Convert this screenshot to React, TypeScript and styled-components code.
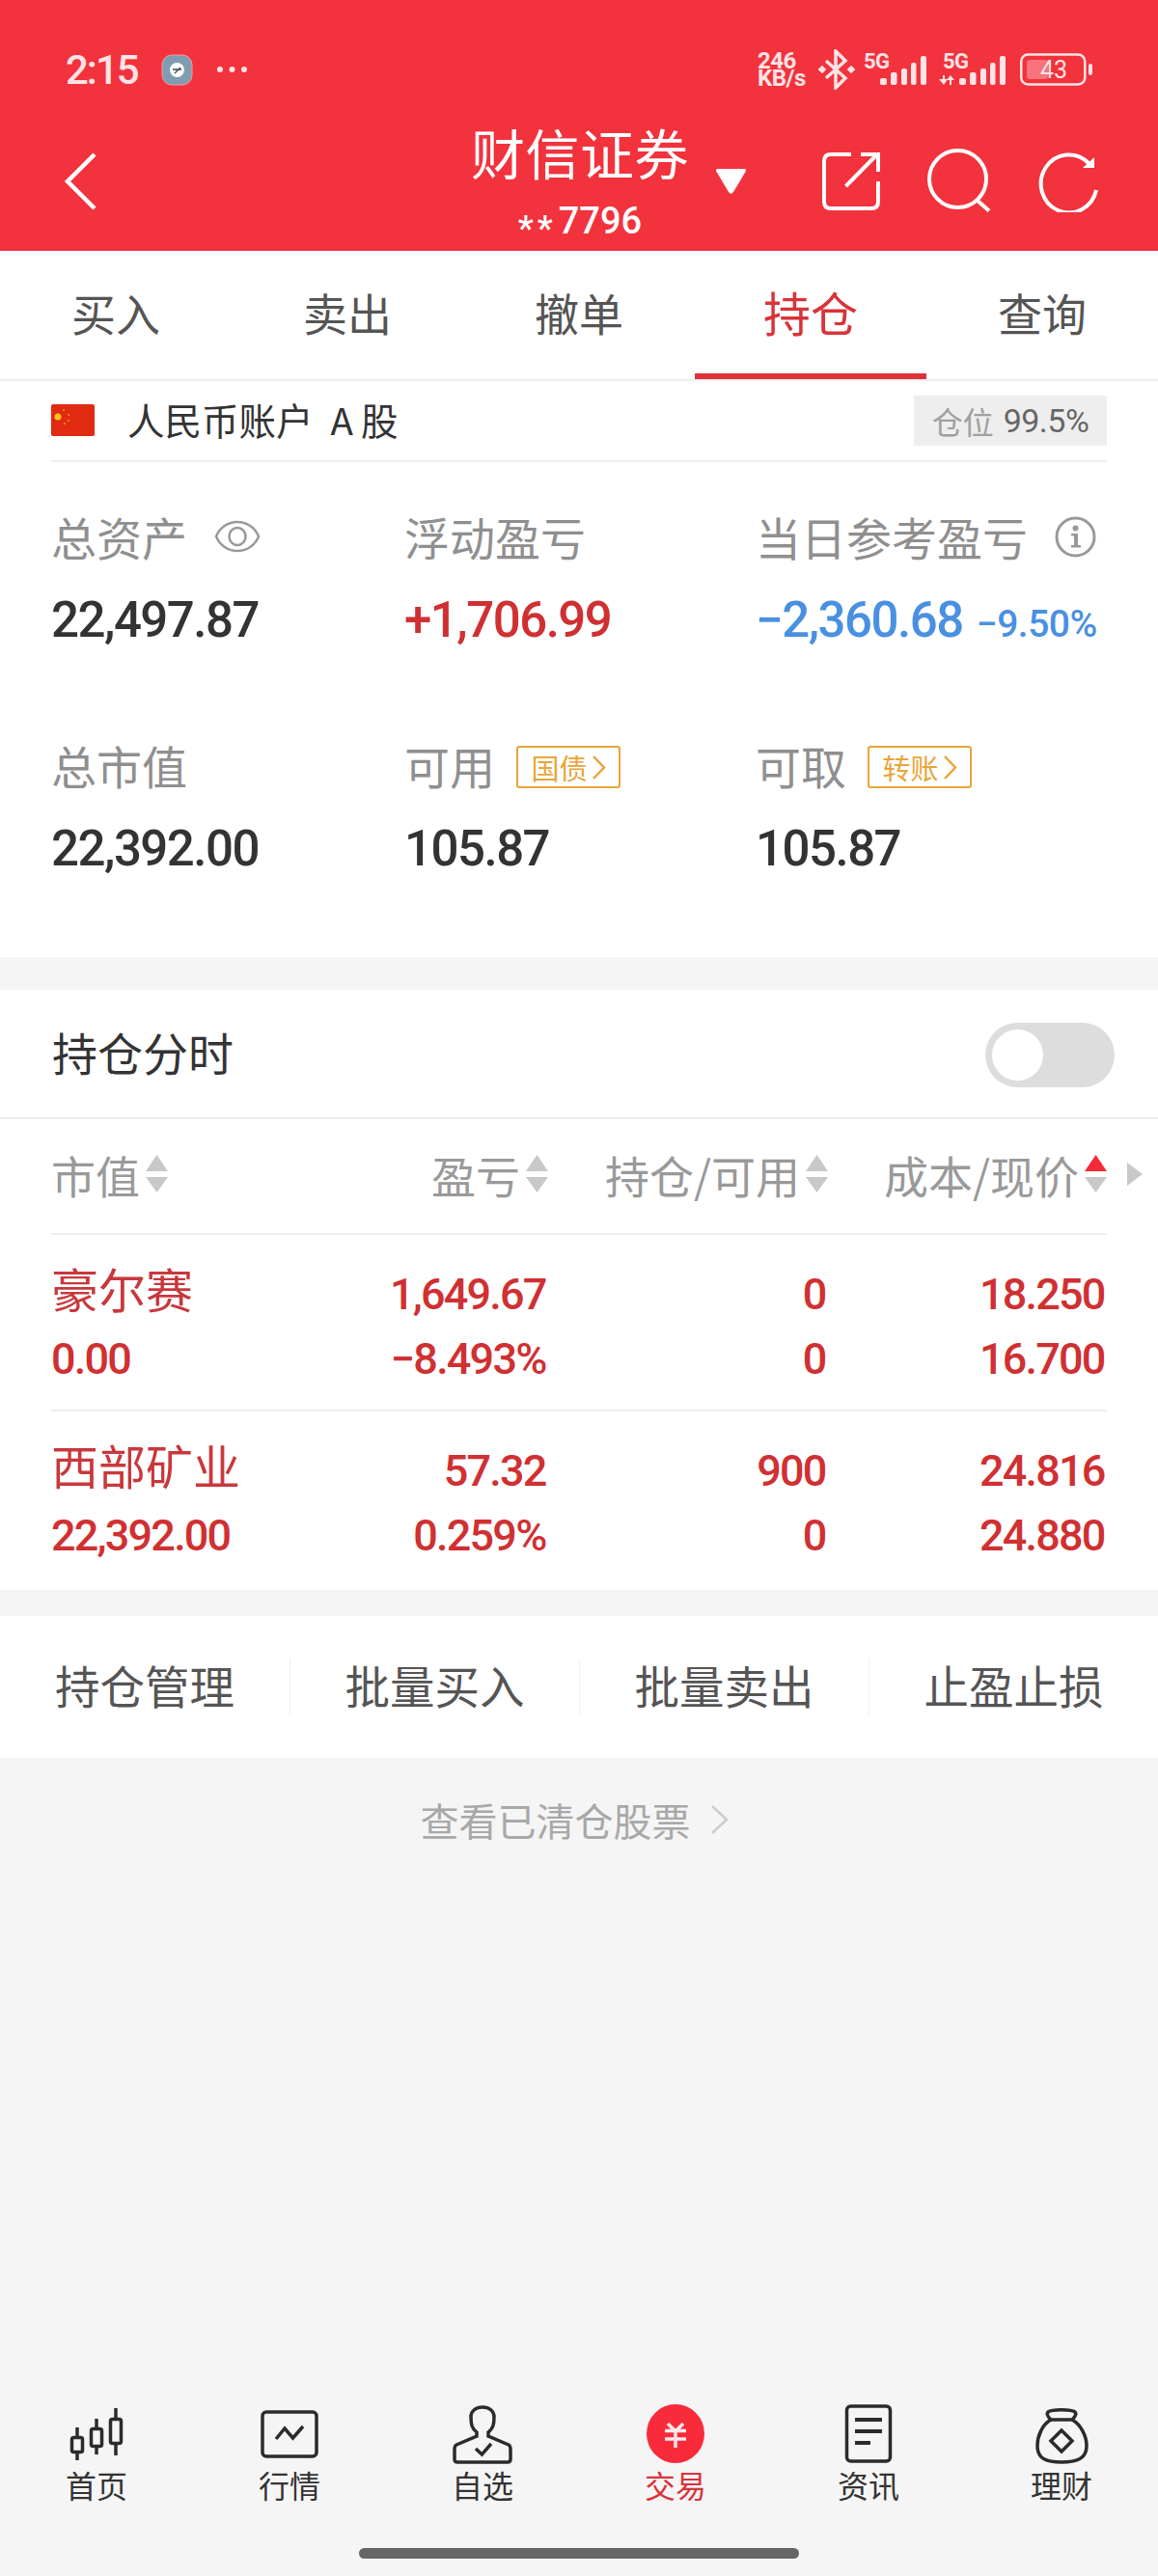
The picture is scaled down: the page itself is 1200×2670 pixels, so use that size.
import React from "react";
import styled, { createGlobalStyle } from "styled-components";

const Global = createGlobalStyle`
  html, body { margin: 0; padding: 0; background: #f5f5f5; }
  #root { width: 1200px; height: 2670px; }
`;

const CJK = `"Noto Sans CJK SC", "Noto Sans", sans-serif`;
const NUM = `Roboto, "Noto Sans CJK SC", sans-serif`;
const RED = "#d03032";

const Page = styled.div`
  width: 1200px;
  height: 2670px;
  display: flex;
  flex-direction: column;
  background: #f5f5f5;
  font-family: ${CJK};
  overflow: hidden;
  position: relative;
`;
const Header = styled.header`
  height: 260px;
  background: #f2323c;
  color: #fff;
  display: flex;
  flex-direction: column;
  flex: none;
`;
const StatusBar = styled.div`
  height: 72px;
  margin-top: 36px;
  padding: 0 68px;
  display: flex;
  align-items: center;
  justify-content: space-between;
  color: #ffe3e5;
`;
const StatusLeft = styled.div`
  display: flex;
  align-items: center;
  gap: 24px;
`;
const Clock = styled.span`
  font: 500 42px Roboto, sans-serif;
  letter-spacing: -2px;
`;
const StatusRight = styled.div`
  display: flex;
  align-items: center;
  gap: 9px;
`;
const Speed = styled.div`
  display: flex;
  flex-direction: column;
  font: 700 24px/18px Roboto, sans-serif;
  letter-spacing: -0.5px;
  width: 54px;
`;
const SignalIcon = styled.svg`
  overflow: visible;
  height: 34px;
  flex: none;
`;
const NavRow = styled.div`
  flex: 1;
  display: flex;
  align-items: flex-start;
  padding: 0 62px 0 66px;
`;
const BackIcon = styled.svg`
  width: 34px;
  height: 60px;
  margin-top: 50px;
  flex: none;
`;
const TitleBlock = styled.div`
  margin-left: 388px;
  margin-top: 16px;
  display: flex;
  align-items: flex-start;
`;
const TitleText = styled.div`
  width: 226px;
  text-align: center;
`;
const Title = styled.div`
  font-size: 56px;
  line-height: 66px;
  letter-spacing: 0.5px;
  white-space: nowrap;
`;
const Sub = styled.div`
  font: 500 38px/42px Roboto, sans-serif;
  margin-top: 18px;
`;
const Star = styled.span`
  vertical-align: -7px;
  font-size: 36px;
  letter-spacing: 4px;
  margin-right: 2px;
`;
const Caret = styled.svg`
  width: 33px;
  height: 28px;
  margin: 50px 0 0 27px;
  flex: none;
`;
const NavIcons = styled.div`
  display: flex;
  align-items: flex-start;
  gap: 49px;
  margin: 46px 0 0 auto;
`;
const Tabs = styled.nav`
  height: 135px;
  background: #fff;
  display: grid;
  grid-template-columns: repeat(5, 240px);
  border-bottom: 2px solid #eeeeee;
  box-sizing: border-box;
  flex: none;
`;
const Tab = styled.div<{ $on?: boolean }>`
  display: flex;
  align-items: center;
  justify-content: center;
  padding-bottom: 8px;
  box-sizing: border-box;
  font-size: ${(p) => (p.$on ? 49 : 46)}px;
  color: ${(p) => (p.$on ? "#d9333a" : "#555")};
  position: relative;
  &::after {
    content: "";
    display: ${(p) => (p.$on ? "block" : "none")};
    position: absolute;
    left: 0;
    right: 0;
    bottom: 0;
    height: 6px;
    background: #dc3339;
  }
`;
const Assets = styled.section`
  background: #fff;
  height: 597px;
  padding: 0 53px;
  flex: none;
`;
const AccountRow = styled.div`
  height: 84px;
  box-sizing: border-box;
  border-bottom: 2px solid #eeeeee;
  padding-bottom: 1px;
  display: flex;
  align-items: center;
  font-size: 38.5px;
  color: #333;
`;
const AccountName = styled.span`
  padding-bottom: 3px;
`;
const Flag = styled.svg`
  width: 45px;
  height: 33px;
  margin-right: 34px;
`;
const ALetter = styled.span`
  padding: 0 8px 0 18px;
`;
const Spacer = styled.div`
  flex: 1;
`;
const Badge = styled.div`
  width: 200px;
  height: 52px;
  background: #eeeeee;
  display: flex;
  align-items: center;
  justify-content: center;
  gap: 10px;
  font-size: 32px;
  color: #a0a0a0;
`;
const BadgeValue = styled.span`
  font: 400 34px Roboto, sans-serif;
  letter-spacing: -0.5px;
  color: #666;
`;
const StatGrid = styled.div`
  display: grid;
  grid-template-columns: 366px 364px 1fr;
  padding-top: 44px;
  grid-auto-rows: 237px;
`;
const Stat = styled.div``;
const StatLabel = styled.div`
  display: flex;
  align-items: center;
  gap: 28px;
  font-size: 47px;
  line-height: 66px;
  color: #8f8f8f;
  height: 66px;
`;
const StatValue = styled.div<{ $tone?: string }>`
  font-family: ${NUM};
  font-weight: 500;
  font-size: 51px;
  letter-spacing: -1.5px;
  line-height: 66px;
  margin-top: 21px;
  color: ${(p) => p.$tone || "#333"};
  display: flex;
  align-items: baseline;
  gap: 14px;
`;
const SmallValue = styled.span`
  font-size: 39px;
  letter-spacing: -0.5px;
`;
const Tag = styled.span`
  width: 108px;
  height: 44px;
  margin: 4px 0 0 -6px;
  box-sizing: border-box;
  border: 2.5px solid #e8a53a;
  border-radius: 3px;
  color: #e8a53a;
  font-size: 29px;
  display: flex;
  align-items: center;
  justify-content: center;
  gap: 4px;
`;
const ChartRow = styled.div`
  margin-top: 34px;
  background: #fff;
  height: 134px;
  box-sizing: border-box;
  border-bottom: 2px solid #eeeeee;
  padding: 0 45px 0 54px;
  display: flex;
  align-items: center;
  justify-content: space-between;
  font-size: 47px;
  color: #333;
  flex: none;
`;
const ChartLabel = styled.span`
  padding-bottom: 6px;
`;
const Toggle = styled.div`
  width: 134px;
  height: 67px;
  margin-top: 2px;
  border-radius: 34px;
  background: #dddddd;
  position: relative;
  &::after {
    content: "";
    position: absolute;
    left: 7px;
    top: 7px;
    width: 53px;
    height: 53px;
    border-radius: 50%;
    background: #fff;
  }
`;
const Holdings = styled.section`
  background: #fff;
  padding: 0 53px;
  height: 488px;
  flex: none;
`;
const HeaderRow = styled.div`
  height: 120px;
  box-sizing: border-box;
  border-bottom: 2px solid #eeeeee;
  padding-bottom: 5px;
  display: grid;
  grid-template-columns: 300px 215px 290px 1fr;
  align-items: center;
  font-size: 46px;
  color: #999;
  position: relative;
`;
const HeadCell = styled.div<{ $left?: boolean }>`
  display: flex;
  align-items: center;
  justify-content: ${(p) => (p.$left ? "flex-start" : "flex-end")};
  gap: 6px;
  white-space: nowrap;
`;
const MoreArrow = styled.div`
  position: absolute;
  right: -37px;
  top: 50%;
  margin-top: -14px;
  width: 0;
  height: 0;
  border-left: 16px solid #c8c8c8;
  border-top: 12px solid transparent;
  border-bottom: 12px solid transparent;
`;
const StockRow = styled.div<{ $last?: boolean }>`
  height: ${(p) => (p.$last ? 185 : 183)}px;
  box-sizing: border-box;
  border-bottom: ${(p) => (p.$last ? "none" : "2px solid #eeeeee")};
  display: grid;
  grid-template-columns: 300px 215px 290px 1fr;
  align-content: start;
  padding-top: 28px;
  color: ${RED};
  grid-auto-rows: 67px;
`;
const StockName = styled.div`
  font-size: 49px;
  line-height: 54px;
  color: #c8383c;
  white-space: nowrap;
`;
const Cell = styled.div<{ $left?: boolean }>`
  font-family: ${NUM};
  font-weight: 500;
  font-size: 45px;
  letter-spacing: -1.8px;
  line-height: 67px;
  padding-right: ${(p) => (p.$left ? 0 : 2.5)}px;
  text-align: ${(p) => (p.$left ? "left" : "right")};
`;
const Actions = styled.div`
  margin-top: 27px;
  background: #fff;
  height: 147px;
  display: grid;
  grid-template-columns: repeat(4, 300px);
  align-items: center;
  flex: none;
`;
const Action = styled.div<{ $first?: boolean }>`
  height: 53px;
  display: flex;
  align-items: center;
  justify-content: center;
  padding-bottom: 6px;
  font-size: 46.5px;
  color: #555;
  border-left: ${(p) => (p.$first ? "none" : "1.5px solid #f0f0f0")};
`;
const ClosedLink = styled.div`
  margin-top: 36px;
  height: 56px;
  padding-right: 10px;
  display: flex;
  align-items: center;
  justify-content: center;
  gap: 20px;
  font-size: 40px;
  color: #a8a8a8;
  flex: none;
`;
const BottomNav = styled.nav`
  margin-top: auto;
  height: 179px;
  display: grid;
  grid-template-columns: repeat(6, 200px);
  flex: none;
`;
const NavItem = styled.div<{ $on?: boolean }>`
  display: flex;
  flex-direction: column;
  align-items: center;
  height: 110px;
  font-size: 32px;
  line-height: 40px;
  color: ${(p) => (p.$on ? "#d9333a" : "#333")};
`;
const IconBox = styled.svg`
  width: 70px;
  height: 64px;
  display: block;
  flex: none;
`;
const HomeBar = styled.div`
  position: absolute;
  left: 372px;
  top: 2641px;
  width: 456px;
  height: 11px;
  border-radius: 6px;
  background: #666;
`;

const Sort = ({ up }: { up?: boolean }) => (
  <svg width="23" height="39" viewBox="0 0 23 39">
    <path d="M11.5 0 L23 17 H0 Z" fill={up ? "#f42a38" : "#c8c8c8"} />
    <path d="M11.5 39 L23 23 H0 Z" fill="#c8c8c8" />
  </svg>
);
const TagChevron = () => (
  <svg width="15" height="27" viewBox="0 0 15 27">
    <path d="M2 2 L13 13.5 L2 25" fill="none" stroke="#e8a53a" strokeWidth="2.5" />
  </svg>
);
const LinkChevron = () => (
  <svg width="19" height="30" viewBox="0 0 19 30">
    <path d="M2 1 L17 15 L2 29" fill="none" stroke="#cccccc" strokeWidth="2.5" />
  </svg>
);
const Bars = ({ dx }: { dx: number }) => (
  <g fill="#ffe3e5">
    <rect x={17 + dx} y="26" width="7" height="7" rx="2" />
    <rect x={28 + dx} y="20" width="6.5" height="13" rx="2" />
    <rect x={39 + dx} y="16" width="6" height="17" rx="2" />
    <rect x={49 + dx} y="10" width="5.5" height="23" rx="2" />
    <rect x={59 + dx} y="3" width="6" height="30" rx="2" />
  </g>
);
const FiveG = ({ x }: { x: number }) => (
  <text x={x} y="16" fontFamily="Roboto" fontWeight="700" fontSize="22" letterSpacing="-0.5" fill="#ffe3e5">
    5G
  </text>
);

const stocks = [
  { name: "豪尔赛", value: "0.00", pl: "1,649.67", pct: "−8.493%", pos: "0", avail: "0", cost: "18.250", price: "16.700" },
  { name: "西部矿业", value: "22,392.00", pl: "57.32", pct: "0.259%", pos: "900", avail: "0", cost: "24.816", price: "24.880" },
];

export default function App() {
  return (
    <Page>
      <Global />
      <Header>
        <StatusBar>
          <StatusLeft>
            <Clock>2:15</Clock>
            <svg width="33" height="33" viewBox="0 0 33 33">
              <rect x="1" y="1" width="31" height="31" rx="10" fill="#7f9cb0" stroke="#f49aa0" />
              <circle cx="16.5" cy="16.5" r="7.5" fill="#fff" />
              <path d="M12 16h9M14 20l6-6" stroke="#445" strokeWidth="1.3" fill="none" />
            </svg>
            <svg width="33" height="10" viewBox="0 0 33 10" fill="#ffe3e5">
              <circle cx="4" cy="5" r="3" /><circle cx="16.5" cy="5" r="3" /><circle cx="29" cy="5" r="3" />
            </svg>
          </StatusLeft>
          <StatusRight>
            <Speed><span>246</span><span>KB/s</span></Speed>
            <svg width="38" height="42" viewBox="0 0 38 42" fill="none" stroke="#ffe3e5" strokeWidth="3.5">
              <path d="M8 12 L28 30 L18 40 V2 L28 12 L8 30" />
              <rect x="1" y="18" width="6" height="6" transform="rotate(45 4 21)" fill="#ffe3e5" stroke="none" />
              <rect x="31" y="18" width="6" height="6" transform="rotate(45 34 21)" fill="#ffe3e5" stroke="none" />
            </svg>
            <SignalIcon width="65" viewBox="0 0 65 34">
              <FiveG x={0} />
              <Bars dx={0} />
            </SignalIcon>
            <SignalIcon width="73" viewBox="0 0 73 34">
              <FiveG x={8} />
              <Bars dx={8} />
              <path d="M4 27 H8 V23 H10 V27 H13 L9 33 Z M12 28 L16 23 L20 28 H17 V33 H15 V28 Z" fill="#ffe3e5" />
            </SignalIcon>
            <SignalIcon width="81" viewBox="0 0 81 34">
              <rect x="7.25" y="1.5" width="66" height="31" rx="7" fill="none" stroke="#ffe3e5" strokeWidth="2.5" />
              <rect x="13" y="7" width="22" height="20" rx="3" fill="#f8737b" />
              <rect x="77" y="11" width="4" height="12" rx="2" fill="#ffe3e5" />
              <text x="41" y="26" textAnchor="middle" fontFamily="Roboto" fontSize="25" fill="#ffe3e5">43</text>
            </SignalIcon>
          </StatusRight>
        </StatusBar>
        <NavRow>
          <BackIcon viewBox="0 0 34 60">
            <path d="M32 2 L4 30 L32 58" fill="none" stroke="#fff" strokeWidth="4.5" />
          </BackIcon>
          <TitleBlock>
            <TitleText>
              <Title>财信证券</Title>
              <Sub><Star>**</Star>7796</Sub>
            </TitleText>
            <Caret viewBox="0 0 33 28">
              <path d="M3 1 H30 Q33 1 31.5 4 L19 25 Q16.5 28.5 14 25 L1.5 4 Q0 1 3 1 Z" fill="#fff" />
            </Caret>
          </TitleBlock>
          <NavIcons>
            <svg width="60" height="66" viewBox="0 0 60 66" fill="none" stroke="#fff" strokeWidth="4">
              <path d="M30 6 H9 Q2 6 2 13 V55 Q2 62 9 62 H51 Q58 62 58 55 V34" />
              <path d="M24.5 39 L57 6 M40 6 H58 V24" />
            </svg>
            <svg width="66" height="66" viewBox="0 0 66 66" fill="none" stroke="#fff" strokeWidth="4">
              <circle cx="31.5" cy="31.5" r="29.5" />
              <path d="M52 54 L64 64.5" />
            </svg>
            <svg width="62" height="66" viewBox="0 0 62 66" fill="none" stroke="#fff" strokeWidth="4">
              <path d="M52 15 A29 30 0 1 0 60 43" />
              <path d="M58 9 V20 H46 Z" fill="#fff" stroke="none" />
            </svg>
          </NavIcons>
        </NavRow>
      </Header>
      <Tabs>
        <Tab>买入</Tab>
        <Tab>卖出</Tab>
        <Tab>撤单</Tab>
        <Tab $on>持仓</Tab>
        <Tab>查询</Tab>
      </Tabs>
      <Assets>
        <AccountRow>
          <Flag viewBox="0 0 45 33">
            <rect width="45" height="33" rx="2" fill="#e02b12" />
            <circle cx="7" cy="13" r="3.5" fill="#f7c31c" />
            <g fill="#f39a1a">
              <circle cx="13" cy="6" r="1" /><circle cx="18" cy="11" r="1" /><circle cx="18" cy="17" r="1" /><circle cx="14" cy="20" r="1" />
            </g>
          </Flag>
          <AccountName>人民币账户<ALetter>A</ALetter>股</AccountName>
          <Spacer />
          <Badge>仓位<BadgeValue>99.5%</BadgeValue></Badge>
        </AccountRow>
        <StatGrid>
          <Stat>
            <StatLabel>
              总资产
              <svg width="48" height="36" viewBox="0 0 48 36" fill="none" stroke="#999" strokeWidth="2.5">
                <path d="M2 18 C10 -2 38 -2 46 18 C38 38 10 38 2 18 Z" />
                <ellipse cx="24" cy="18" rx="8.5" ry="9" />
              </svg>
            </StatLabel>
            <StatValue>22,497.87</StatValue>
          </Stat>
          <Stat>
            <StatLabel>浮动盈亏</StatLabel>
            <StatValue $tone={RED}>+1,706.99</StatValue>
          </Stat>
          <Stat>
            <StatLabel>
              当日参考盈亏
              <svg width="43" height="43" viewBox="0 0 43 43" fill="#999">
                <circle cx="21.5" cy="21.5" r="19.5" fill="none" stroke="#999" strokeWidth="3" />
                <circle cx="21.5" cy="12.5" r="3" />
                <path d="M17 18 H24 V30 H27 V32.500 H17 V30 H20 V20.500 H17 Z" />
              </svg>
            </StatLabel>
            <StatValue $tone="#4a90e2">−2,360.68<SmallValue>−9.50%</SmallValue></StatValue>
          </Stat>
          <Stat>
            <StatLabel>总市值</StatLabel>
            <StatValue>22,392.00</StatValue>
          </Stat>
          <Stat>
            <StatLabel>
              可用
              <Tag>国债<TagChevron /></Tag>
            </StatLabel>
            <StatValue>105.87</StatValue>
          </Stat>
          <Stat>
            <StatLabel>
              可取
              <Tag>转账<TagChevron /></Tag>
            </StatLabel>
            <StatValue>105.87</StatValue>
          </Stat>
        </StatGrid>
      </Assets>
      <ChartRow>
        <ChartLabel>持仓分时</ChartLabel>
        <Toggle />
      </ChartRow>
      <Holdings>
        <HeaderRow>
          <HeadCell $left>市值<Sort /></HeadCell>
          <HeadCell>盈亏<Sort /></HeadCell>
          <HeadCell>持仓/可用<Sort /></HeadCell>
          <HeadCell>成本/现价<Sort up /></HeadCell>
          <MoreArrow />
        </HeaderRow>
        {stocks.map((s, i) => (
          <StockRow key={s.name} $last={i === stocks.length - 1}>
            <StockName>{s.name}</StockName>
            <Cell>{s.pl}</Cell>
            <Cell>{s.pos}</Cell>
            <Cell>{s.cost}</Cell>
            <Cell $left>{s.value}</Cell>
            <Cell>{s.pct}</Cell>
            <Cell>{s.avail}</Cell>
            <Cell>{s.price}</Cell>
          </StockRow>
        ))}
      </Holdings>
      <Actions>
        <Action $first>持仓管理</Action>
        <Action>批量买入</Action>
        <Action>批量卖出</Action>
        <Action>止盈止损</Action>
      </Actions>
      <ClosedLink>
        查看已清仓股票
        <LinkChevron />
      </ClosedLink>
      <BottomNav>
        <NavItem>
          <IconBox viewBox="0 0 70 64" fill="none" stroke="#2b2b2b" strokeWidth="3.5">
            <rect x="9.500" y="35.500" width="11" height="15" rx="2" />
            <path d="M15 25 V35.500 M15 50.500 V59" />
            <rect x="29.500" y="26.500" width="11" height="18" rx="2" />
            <path d="M35 16 V26.500 M35 44.500 V53" />
            <rect x="49.500" y="16.500" width="11" height="25" rx="2" />
            <path d="M55 5 V16.500 M55 41.500 V54" />
          </IconBox>
          首页
        </NavItem>
        <NavItem>
          <IconBox viewBox="0 0 70 64" fill="none" stroke="#2b2b2b" strokeWidth="3.5">
            <rect x="7" y="9" width="56" height="46" rx="4" />
            <path d="M21 37 L30 26 L38.500 36 L49 24" />
          </IconBox>
          行情
        </NavItem>
        <NavItem>
          <IconBox viewBox="0 0 70 64" fill="none" stroke="#2b2b2b" strokeWidth="3.5">
            <path d="M29 30 C24 26 23 22 23 14 C23 8 28 4 35 4 C42 4 47 8 47 14 C47 22 46 26 41 30 V34 L62 43 Q64 44 64 48 V58 Q64 61 61 61 H9 Q6 61 6 58 V48 Q6 44 8 43 L29 34 Z" />
            <path d="M28 47 L34.400 53 L44 42" />
          </IconBox>
          自选
        </NavItem>
        <NavItem $on>
          <IconBox viewBox="0 0 70 64">
            <ellipse cx="35" cy="31.500" rx="30" ry="30.500" fill="#f92b3a" />
            <path d="M27 21 L35 29 L43 21 M24 28.500 H46 M24 37 H46 M35 29 V46" fill="none" stroke="#ffe9ea" strokeWidth="3.5" />
          </IconBox>
          交易
        </NavItem>
        <NavItem>
          <IconBox viewBox="0 0 70 64" fill="none" stroke="#2b2b2b" strokeWidth="3.5">
            <rect x="12.500" y="3" width="45" height="57" rx="4" />
            <path d="M21 17 H49 M21 29 H49 M21 41 H37" strokeWidth="4" />
          </IconBox>
          资讯
        </NavItem>
        <NavItem>
          <IconBox viewBox="0 0 70 64" fill="none" stroke="#2b2b2b" strokeWidth="3.5">
            <path d="M24 17 C21 14 19 11 21 9 C25 6 45 6 49 9 C51 11 49 14 46 17 Z" />
            <path d="M24 17 C15 22 10 34 10 44 C10 58 20 61 35 61 C50 61 61 58 61 44 C61 34 55 22 46 17" />
            <path d="M35 28 L46 39 L35 50 L24 39 Z" />
          </IconBox>
          理财
        </NavItem>
      </BottomNav>
      <HomeBar />
    </Page>
  );
}
